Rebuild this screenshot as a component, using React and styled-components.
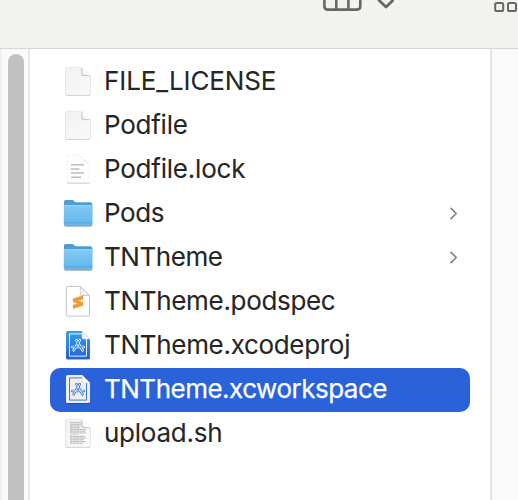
import React from "react";
import styled, { createGlobalStyle } from "styled-components";

const GlobalStyle = createGlobalStyle`
  * { box-sizing: border-box; }
  body { margin: 0; background: #fff; font-family: Inter, "Liberation Sans", sans-serif; }
`;

const Window = styled.div`
  width: 518px;
  height: 500px;
  overflow: hidden;
  display: flex;
  flex-direction: column;
  background: #fff;
`;

const Toolbar = styled.header`
  height: 49px;
  flex: none;
  background: #f2f2f0;
  border-bottom: 1px solid #d6d6d5;
  display: flex;
  align-items: flex-start;
  padding-left: 323px;
`;

const ViewButton = styled.span`
  display: flex;
  margin-right: ${(p) => p.$gap}px;
`;

const Columns = styled.main`
  flex: 1;
  display: flex;
  min-height: 0;
`;

const ScrollGutter = styled.div`
  width: 30px;
  flex: none;
  background: #fafafa;
  border-left: 2px solid #f0f0f0;
  border-right: 2px solid #e8e8e8;
  padding: 5px 4px 0 6px;
`;

const ScrollThumb = styled.div`
  width: 16px;
  height: 460px;
  border-radius: 8px;
  background: #c1c1c1;
`;

const FileList = styled.ul`
  list-style: none;
  margin: 0;
  padding: 11px 20px 0;
  width: 460px;
  flex: none;
`;

const FileRow = styled.li`
  height: 44px;
  display: flex;
  align-items: center;
  padding: 0 12px;
  border-radius: 10px;
  background: ${(p) => (p.$selected ? "#2962d9" : "transparent")};
  color: ${(p) => (p.$selected ? "#fff" : "#262626")};
  -webkit-text-stroke: ${(p) => (p.$selected ? "0.25px" : "0.08px")} currentColor;
`;

const FileName = styled.span`
  margin-left: 10px;
  flex: 1;
  font-size: 26px;
  line-height: 42px;
  padding-bottom: 2px;
  white-space: nowrap;
  letter-spacing: ${(p) => p.$tracking}px;
`;

const Icon = styled.svg`
  width: 32px;
  height: 32px;
  flex: none;
  overflow: visible;
`;

const NextColumn = styled.div`
  flex: 1;
  border-left: 2px solid #e4e4e4;
  background: #fafafa;
`;

const PAGE = "M5 1.2H20L28.5 9.6V27.3Q28.5 29.2 26.7 29.2H5.2Q3.4 29.2 3.4 27.3V3Q3.4 1.2 5 1.2Z";
const XCODE_PAGE = "M5.6 1H20L28 9V27.5Q28 29.1 26.4 29.1H5.6Q4 29.1 4 27.5V2.6Q4 1 5.6 1Z";
const APP_GLYPH = "M17.8 10L11.6 20.4M14.4 10L20.6 20.4M10.2 16.9H21.8";

const Defs = () => (
  <svg width="0" height="0">
    <defs>
      <linearGradient id="paper" x1="0" y1="0" x2="1" y2="1">
        <stop offset="0" stopColor="#f1f1f1" />
        <stop offset="1" stopColor="#fafafa" />
      </linearGradient>
      <linearGradient id="fold" x1="0" y1="1" x2="1" y2="0">
        <stop offset="0" stopColor="#dcdcdc" />
        <stop offset="0.3" stopColor="#f8f8f8" />
        <stop offset="0.5" stopColor="#fff" />
      </linearGradient>
      <linearGradient id="folder" x1="0" y1="0" x2="0" y2="1">
        <stop offset="0" stopColor="#82caf5" />
        <stop offset="1" stopColor="#62b4ea" />
      </linearGradient>
      <linearGradient id="project" x1="0" y1="0" x2="0" y2="1">
        <stop offset="0" stopColor="#38a0e5" />
        <stop offset="1" stopColor="#2460d8" />
      </linearGradient>
    </defs>
  </svg>
);

const BlankPage = () => (
  <>
    <path d={PAGE} transform="translate(0 .8)" fill="#c8c8c8" />
    <path d={PAGE} fill="url(#paper)" stroke="#dedede" strokeWidth=".5" />
    <path d="M20 1.2V8Q20 9.5 21.5 9.5H28.4Z" fill="url(#fold)" />
    <path d="M19.8 2V8Q19.8 9.6 21.5 9.6H27.5" fill="none" stroke="#b8b8b8" strokeWidth=".8" />
  </>
);

const LockPage = () => (
  <>
    <path d="M5 1V28.8H27.4V9.5Q22 9 20.5 5Q19 1.4 15 1Z" fill="#fdfdfd" stroke="#f3f3f3" strokeWidth=".6" />
    <path d="M16 .9Q19.4 1.4 20.6 5Q21.8 8.5 27.2 9.2Z" fill="#e4e4e4" />
    <path d="M4.8 29.2H27.6" stroke="#c9c9c9" strokeWidth=".9" />
    <path d="M9 10.7H22M9 14.9H17.3M9 19.1H22.2M9 23.3H19" stroke="#bdbdbd" strokeWidth="1.5" />
  </>
);

const Folder = () => (
  <>
    <path d="M2 6H30.3V27Q30.3 28.9 28.4 28.9H4Q2 28.9 2 27Z" fill="#9fa9b0" opacity=".75" />
    <path d="M2 3.6Q2 2 3.6 2H10.2Q11.3 2 12.2 2.9L13.4 4.2H28.5Q30.2 4.2 30.2 5.9V12H2Z" fill="#4d9fd2" />
    <path d="M1.8 8Q1.8 7.3 2.6 7.3H29.6Q30.4 7.3 30.4 8V26.2Q30.4 28 28.6 28H3.6Q1.8 28 1.8 26.2Z" fill="url(#folder)" />
    <path d="M2.4 7.7H29.8" stroke="#9bdafa" strokeWidth=".8" />
    <path d="M2 24.8H30.2" stroke="#4f9fd8" strokeWidth=".7" />
  </>
);

const SublimePage = () => (
  <>
    <path d="M5.8 .4H18.3L27.5 9.6V28.7Q27.5 30.2 26 30.2H5.8Q4.4 30.2 4.4 28.7V1.9Q4.4 .4 5.8 .4Z" fill="#fff" stroke="#bebebe" strokeWidth=".9" />
    <path d="M18.3 .7V8Q18.3 9.5 19.8 9.5H27.2Z" fill="#f5f5f5" stroke="#c2c2c2" strokeWidth=".8" />
    <path d="M21 9.5V13.2L16 14.7L21 16.3V19.5L11 22.7V19L16 17.5L11 15.9V12.7Z" fill="#f29a34" stroke="#f29a34" strokeWidth=".3" />
  </>
);

const XcodePage = ({ workspace }) => {
  const line = workspace ? "#3978dc" : "#e9f4ff";
  return (
    <>
      <path d={XCODE_PAGE} transform="translate(0 .8)" fill={workspace ? "#204fae" : "#a9b3c1"} />
      <path d={XCODE_PAGE} fill={workspace ? "#f0f0f0" : "url(#project)"} />
      <path d="M20 3.9H7.5V26.1H24.5V9" fill="none" stroke={line} strokeWidth="1" />
      <path d="M20 1V7.5Q20 9 21.5 9H28Z" fill={workspace ? "#fff" : "#f3f7fb"} stroke={workspace ? "#b9c5d8" : "#c4d5e5"} strokeWidth=".5" />
      <g fill="none" stroke={line} strokeLinecap="round">
        <path d={APP_GLYPH} strokeWidth="2.5" />
        <path d={APP_GLYPH} stroke={workspace ? "#e2ebf8" : "#3683df"} strokeWidth="1" />
      </g>
    </>
  );
};

const SCRIPT_LINES = [20, 19, 20, 18, 24, 23.5, 24, 16, 23, 24, 22, 24, 21];

const ScriptPage = () => (
  <>
    <BlankPage />
    {SCRIPT_LINES.map((to, i) => (
      <path
        key={i}
        d={`M8 ${4.6 + i * 1.72}H${i < 3 ? Math.min(to, 18.8) : to}`}
        stroke={i === 7 ? "#d6d6d6" : "#b2b2b2"}
        strokeWidth=".95"
        strokeDasharray={i % 2 ? "3.4 .4 1.8 .3" : "2.1 .3 4.2 .4"}
      />
    ))}
  </>
);

const ICONS = {
  blank: <BlankPage />,
  lock: <LockPage />,
  folder: <Folder />,
  sublime: <SublimePage />,
  project: <XcodePage />,
  workspace: <XcodePage workspace />,
  script: <ScriptPage />,
};

const FILES = [
  { name: "FILE_LICENSE", icon: "blank", tracking: -0.1 },
  { name: "Podfile", icon: "blank", tracking: -0.25 },
  { name: "Podfile.lock", icon: "lock", tracking: -0.22 },
  { name: "Pods", icon: "folder", tracking: -0.4, expandable: true },
  { name: "TNTheme", icon: "folder", tracking: -0.45, expandable: true },
  { name: "TNTheme.podspec", icon: "sublime", tracking: -0.32 },
  { name: "TNTheme.xcodeproj", icon: "project", tracking: -0.31 },
  { name: "TNTheme.xcworkspace", icon: "workspace", tracking: -0.5, selected: true },
  { name: "upload.sh", icon: "script", tracking: -0.25 },
];

const Chevron = () => (
  <svg width="8" height="14" viewBox="0 0 8 14" fill="none" stroke="#858585" strokeWidth="1.7">
    <path d="M1 1.3L6.2 6.5L1 11.7" strokeLinecap="round" strokeLinejoin="round" />
  </svg>
);

export default function App() {
  return (
    <Window>
      <GlobalStyle />
      <Toolbar>
        <ViewButton $gap={15}>
          <svg width="39" height="12" viewBox="0 0 39 12" fill="none" stroke="#676765" strokeWidth="2.6">
            <path d="M1.4 -6V6.3Q1.4 9.6 4.7 9.6H34Q37.3 9.6 37.3 6.3V-6M13.3 -6V9M25.4 -6V9" />
          </svg>
        </ViewButton>
        <ViewButton $gap={100}>
          <svg width="17" height="12" viewBox="0 0 17 12" fill="none" stroke="#676765" strokeWidth="2.8">
            <path d="M2 .2L9 7.1L16 .2" strokeLinecap="round" strokeLinejoin="round" />
          </svg>
        </ViewButton>
        <ViewButton $gap={0}>
          <svg width="26" height="13" viewBox="0 0 26 13" fill="none" stroke="#676765" strokeWidth="2">
            <rect x="1.2" y="3" width="8" height="8" rx="1.6" />
            <rect x="14" y="3" width="8" height="8" rx="1.6" />
          </svg>
        </ViewButton>
      </Toolbar>
      <Columns>
        <ScrollGutter>
          <ScrollThumb />
        </ScrollGutter>
        <FileList>
          {FILES.map((file) => (
            <FileRow key={file.name} $selected={file.selected}>
              <Icon viewBox="0 0 32 32">{ICONS[file.icon]}</Icon>
              <FileName $tracking={file.tracking}>{file.name}</FileName>
              {file.expandable && <Chevron />}
            </FileRow>
          ))}
        </FileList>
        <NextColumn />
      </Columns>
      <Defs />
    </Window>
  );
}
